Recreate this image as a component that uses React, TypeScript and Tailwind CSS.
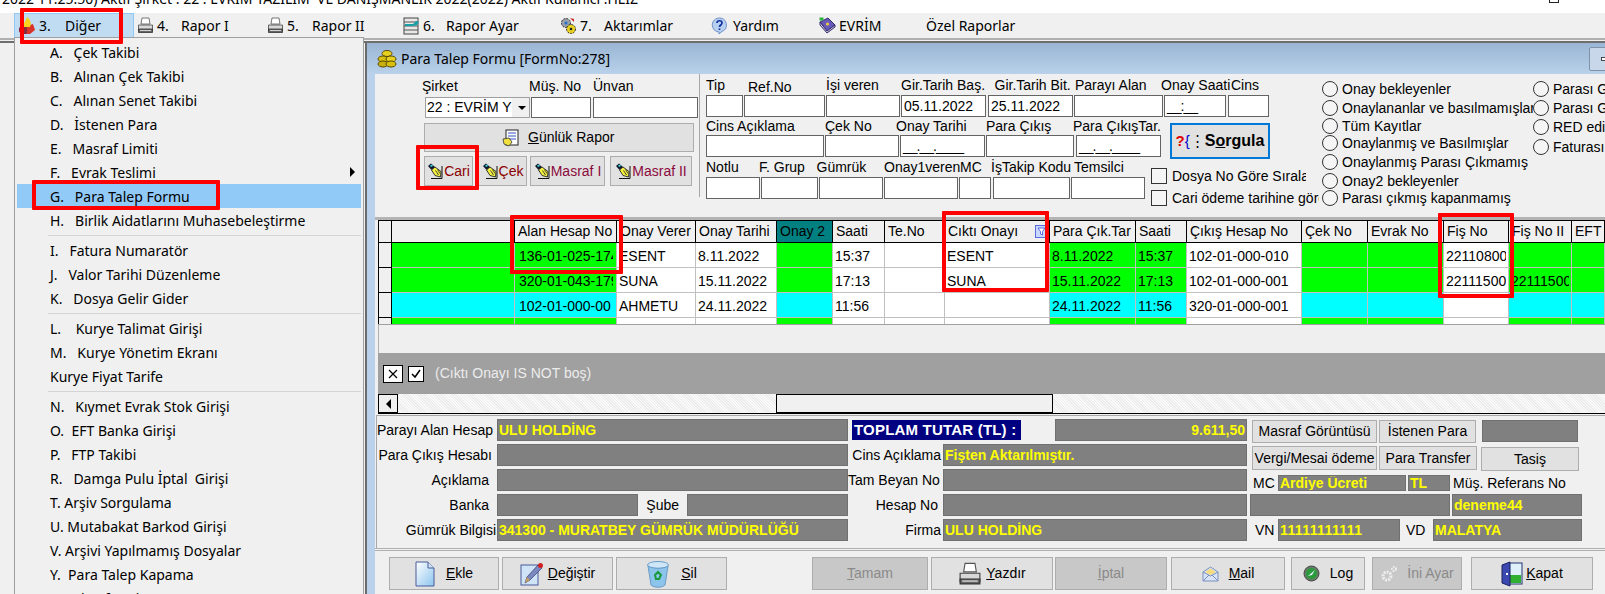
import React from "react";

const GREEN = "bg-[#00ff00]";
const CYAN = "bg-[#00ffff]";
const WHITE = "bg-white";

function Fire() {
  return (
    <svg width="18" height="18" viewBox="0 0 18 18" className="flex-none">
      <path d="M1 11 L5 7 L9 9 L9 17 L5 17 L1 15 Z" fill="#8a2a3a" />
      <path d="M9 9 L15 7 L17 13 L12 17 L9 17 Z" fill="#d8342a" />
      <path d="M6 10 C5 6 8 4 9 0 C12 2 14 6 12 10 Z" fill="#f7d21e" />
    </svg>
  );
}
function Printer({ s = 17 }: { s?: number }) {
  return (
    <svg width={s} height={s} viewBox="0 0 17 17" className="flex-none">
      <path d="M5 1 H12 L13 7 H4 Z" fill="#fff" stroke="#555" strokeWidth="0.8" />
      <path d="M1.5 8 H15.5 V14 H1.5 Z" fill="#d8d8d8" stroke="#444" strokeWidth="0.8" />
      <path d="M1.5 12 H15.5 V15.5 H1.5 Z" fill="#666" stroke="#333" strokeWidth="0.8" />
      <path d="M3 13.5 H14" stroke="#eee" strokeWidth="0.8" />
    </svg>
  );
}
function Tools() {
  return (
    <svg width="17" height="18" viewBox="0 0 17 18" className="flex-none">
      <rect x="1" y="1" width="14" height="16" fill="#e8e8e8" stroke="#444" />
      <path d="M1 5 H15 M1 9 H15 M1 13 H15" stroke="#555" />
      <path d="M2 7 H10 L13 4 L16 5 L14 8 L10 9 H2 Z" fill="#17a0a8" />
    </svg>
  );
}
function Gears() {
  return (
    <svg width="17" height="18" viewBox="0 0 17 18" className="flex-none">
      <circle cx="6" cy="6" r="4.5" fill="#9aa0a8" stroke="#333" strokeDasharray="2 1" />
      <circle cx="6" cy="6" r="1.5" fill="#1f6fd0" />
      <circle cx="11" cy="12" r="4.5" fill="#e8d020" stroke="#333" strokeDasharray="2 1" />
      <path d="M10 1 L14 2 L14 5 Z" fill="#d02020" />
      <circle cx="11" cy="12" r="1.3" fill="#222" />
    </svg>
  );
}
function Help() {
  return (
    <svg width="17" height="18" viewBox="0 0 17 18" className="flex-none">
      <path d="M8.5 1 A7 7 0 0 1 11 14.5 L8 17 L8 15 A7 7 0 0 1 8.5 1 Z" fill="#b8d0f0" stroke="#7090c8" />
      <path d="M6 6 C6 3 11 3 11 6 C11 8 8.5 8 8.5 10 M8.5 11.5 V13" stroke="#1030a0" strokeWidth="1.7" fill="none" />
    </svg>
  );
}
function Book() {
  return (
    <svg width="17" height="17" viewBox="0 0 17 17" className="flex-none">
      <path d="M1 5 L9 1 L16 8 L8 14 Z" fill="#6a5ab8" stroke="#332a70" />
      <path d="M1 5 V8 L8 16 L16 10 V8 L8 14 Z" fill="#c8c8d8" stroke="#332a70" />
      <circle cx="8.5" cy="7" r="1.5" fill="#f0d040" />
      <rect x="0.5" y="0.5" width="4" height="3" fill="#30b040" />
    </svg>
  );
}
function Coins() {
  return (
    <svg width="20" height="20" viewBox="0 0 20 20" className="flex-none">
      <ellipse cx="10" cy="4.5" rx="5" ry="3" fill="#e8d020" stroke="#5a4a00" />
      <ellipse cx="6" cy="10" rx="5" ry="3" fill="#d8c010" stroke="#5a4a00" />
      <ellipse cx="14" cy="10" rx="5" ry="3" fill="#e8d020" stroke="#5a4a00" />
      <ellipse cx="6" cy="15" rx="5" ry="3" fill="#c8b010" stroke="#5a4a00" />
      <ellipse cx="14" cy="15" rx="5" ry="3" fill="#d8c010" stroke="#5a4a00" />
    </svg>
  );
}
function PenHand() {
  return (
    <svg width="17" height="17" viewBox="0 0 17 17" className="flex-none">
      <path d="M1 3 L4 0.5 L8 4 L4.5 7 Z" fill="#10182a" />
      <path d="M3 2.5 L5 1.5 L6 3 L4 4 Z" fill="#40d0e0" />
      <path d="M4.5 7 L8 4 L14 8.5 L13.5 14 L8 12.5 Z" fill="#f4f040" stroke="#222" strokeWidth="0.9" />
      <path d="M8.5 7.5 L11.5 12 M10.5 6.5 L13 10.5" stroke="#222" strokeWidth="0.8" />
      <path d="M15 3 V15.5 H4" stroke="#111" fill="none" />
    </svg>
  );
}
function DocHand() {
  return (
    <svg width="17" height="18" viewBox="0 0 17 18" className="flex-none">
      <rect x="4" y="1" width="12" height="15" fill="#fff" stroke="#222" />
      <path d="M6 4 H14 M6 7 H14 M6 10 H14" stroke="#3050c0" />
      <path d="M1 10 L7 9 L10 13 L7 17 L2 15 Z" fill="#f0e040" stroke="#333" strokeWidth="0.8" />
    </svg>
  );
}
function Doc() {
  return (
    <svg width="20" height="26" viewBox="0 0 20 26" className="flex-none">
      <defs>
        <linearGradient id="dg" x1="0" y1="0" x2="1" y2="1">
          <stop offset="0" stopColor="#ffffff" />
          <stop offset="1" stopColor="#8cc4ee" />
        </linearGradient>
      </defs>
      <path d="M1 1 H13 L19 7 V25 H1 Z" fill="url(#dg)" stroke="#4a5a9a" />
      <path d="M13 1 V7 H19" fill="#cfe4f6" stroke="#4a5a9a" />
    </svg>
  );
}
function PencilDoc() {
  return (
    <svg width="24" height="24" viewBox="0 0 24 24" className="flex-none">
      <rect x="1" y="3" width="17" height="20" fill="#cfe4f6" stroke="#4a5a9a" />
      <path d="M5 21 L7 15 L18 3 L22 6 L10 18 Z" fill="#7a88c0" stroke="#3a3a70" strokeWidth="0.7" />
      <path d="M5 21 L7 15 L10 18 Z" fill="#c8a060" />
      <circle cx="20.5" cy="3.5" r="2.5" fill="#d02020" />
    </svg>
  );
}
function Bin() {
  return (
    <svg width="24" height="28" viewBox="0 0 24 28" className="flex-none">
      <ellipse cx="12" cy="5" rx="10.5" ry="3.5" fill="#cfe6f8" stroke="#6a9cc8" />
      <path d="M2 6 L5 25 C8 28 16 28 19 25 L22 6 C18 9 6 9 2 6 Z" fill="#8cc4ec" stroke="#6a9cc8" />
      <path d="M9 15 L12 12 L15 15 L13 19 L10 19 Z" fill="none" stroke="#1a9a3a" strokeWidth="2" />
    </svg>
  );
}
function Mail() {
  return (
    <svg width="17" height="16" viewBox="0 0 17 16" className="flex-none">
      <path d="M1 6 L8.5 1 L16 6 V15 H1 Z" fill="#d8e4f6" stroke="#7a90c0" />
      <path d="M3 6 L8.5 2.5 L14 6 L8.5 9 Z" fill="#f6dc80" />
      <path d="M1 6 L8.5 10 L16 6 M1 15 L7 9 M16 15 L10 9" fill="none" stroke="#7a90c0" />
    </svg>
  );
}
function Log() {
  return (
    <svg width="17" height="17" viewBox="0 0 17 17" className="flex-none">
      <circle cx="8.5" cy="8.5" r="7.5" fill="#6a7a6a" stroke="#444" />
      <circle cx="8.5" cy="8.5" r="5.5" fill="#2a9a3a" />
      <path d="M5 11 L12 5 L9 10 Z" fill="#e0f0ff" />
    </svg>
  );
}
function Gear() {
  return (
    <svg width="17" height="17" viewBox="0 0 17 17" className="flex-none">
      <circle cx="7" cy="11" r="4" fill="none" stroke="#eee" strokeWidth="3" strokeDasharray="2 1" />
      <circle cx="14" cy="4" r="2" fill="none" stroke="#eee" strokeWidth="2" strokeDasharray="1.5 1" />
    </svg>
  );
}
function Door() {
  return (
    <svg width="22" height="26" viewBox="0 0 22 26" className="flex-none">
      <rect x="8" y="2" width="13" height="21" fill="#dff0fa" stroke="#223070" />
      <rect x="9" y="14" width="11" height="8" fill="#30b030" />
      <path d="M1 4 L9 1 V25 L1 22 Z" fill="#3a48b0" stroke="#1a2060" />
      <rect x="5" y="12" width="2" height="2" fill="#fff" />
    </svg>
  );
}

const menuBar: { icon: React.ReactNode; num?: string; text: string; box: string; gap: string; space: string }[] = [
  { icon: <Printer />, num: "4.", text: "Rapor I", box: "w-[130px]", gap: "w-[21px]", space: "gap-[3px]" },
  { icon: <Printer />, num: "5.", text: "Rapor II", box: "w-[136px]", gap: "w-[22px]", space: "gap-[3px]" },
  { icon: <Tools />, num: "6.", text: "Rapor Ayar", box: "w-[157px]", gap: "w-[20px]", space: "gap-[3px]" },
  { icon: <Gears />, num: "7.", text: "Aktarımlar", box: "w-[151px]", gap: "w-[21px]", space: "gap-[3px]" },
  { icon: <Help />, text: "Yardım", box: "w-[108px]", gap: "", space: "gap-[5px]" },
  { icon: <Book />, text: "EVRİM", box: "w-[107px]", gap: "", space: "gap-[3px]" },
];

const menuItems: (string | null)[] = [
  "A.   Çek Takibi",
  "B.   Alınan Çek Takibi",
  "C.   Alınan Senet Takibi",
  "D.   İstenen Para",
  "E.   Masraf Limiti",
  "F.   Evrak Teslimi",
  "G.   Para Talep Formu",
  "H.   Birlik Aidatlarını Muhasebeleştirme",
  null,
  "I.   Fatura Numaratör",
  "J.   Valor Tarihi Düzenleme",
  "K.   Dosya Gelir Gider",
  null,
  "L.    Kurye Talimat Girişi",
  "M.   Kurye Yönetim Ekranı",
  "Kurye Fiyat Tarife",
  null,
  "N.   Kıymet Evrak Stok Girişi",
  "O.  EFT Banka Girişi",
  "P.   FTP Takibi",
  "R.   Damga Pulu İptal  Girişi",
  "T. Arşiv Sorgulama",
  "U. Mutabakat Barkod Girişi",
  "V. Arşivi Yapılmamış Dosyalar",
  "Y.  Para Talep Kapama",
  "Z. Sal Raf And Tarama",
];

function Labels({ items }: { items: [string, string][] }) {
  return (
    <>
      {items.map(([t, c]) => (
        <span key={t} className={`flex-none whitespace-nowrap ${c}`}>
          {t}
        </span>
      ))}
    </>
  );
}

function Inp({ w, children }: { w: string; children?: React.ReactNode }) {
  return (
    <div className={`flex-none h-full bg-white border border-[#646464] px-[2px] leading-[20px] overflow-hidden whitespace-nowrap ${w}`}>
      {children}
    </div>
  );
}

function Mask() {
  return <span className="tracking-[-1px] text-black">__.__.____</span>;
}

function SmallBtn({ w, color, children }: { w: string; color: string; children: React.ReactNode }) {
  return (
    <div className={`flex-none h-[30px] flex items-center justify-center bg-[#e1e1e1] border border-[#adadad] ${w} ${color}`}>
      <PenHand />
      {children}
    </div>
  );
}

function Radio({ h, text, w }: { h: string; text: string; w: string }) {
  return (
    <div className={`flex items-start overflow-hidden whitespace-nowrap ${h} ${w}`}>
      <span className="flex-none w-[16px] h-[16px] rounded-full border border-[#333] bg-[#f5f5f5] mr-[4px]" />
      <span className="leading-[16px]">{text}</span>
    </div>
  );
}

const columns = "grid grid-cols-[14px_123px_102px_79px_81px_56px_52px_60px_105px_86px_51px_115px_66px_76px_65px_63px_33px]";

const headers = ["", "", "Alan Hesap No", "Onay Verer", "Onay Tarihi", "Onay 2", "Saati", "Te.No", "Cıktı Onayı", "Para Çık.Tar", "Saati", "Çıkış Hesap No", "Çek No", "Evrak No", "Fiş No", "Fiş No II", "EFT"];

function rowCells(c: string, v: string[]) {
  const bg = [
    "bg-[#f0f0f0]", c, c, WHITE, WHITE, c, WHITE, WHITE, WHITE, c, c, WHITE, c, c, WHITE, c, c,
  ];
  return bg.map((b, i) => ({ b, t: v[i] || "" }));
}

const rows = [
  { h: "h-[25px]", cells: rowCells(GREEN, ["", "", "136-01-025-174", "ESENT", "8.11.2022", "", "15:37", "", "ESENT", "8.11.2022", "15:37", "102-01-000-010", "", "", "221108000", "", ""]) },
  { h: "h-[25px]", cells: rowCells(GREEN, ["", "", "320-01-043-179", "SUNA", "15.11.2022", "", "17:13", "", "SUNA", "15.11.2022", "17:13", "102-01-000-001", "", "", "221115000", "221115000", ""]) },
  { h: "h-[25px]", cells: rowCells(CYAN, ["", "", "102-01-000-00", "AHMETU", "24.11.2022", "", "11:56", "", "", "24.11.2022", "11:56", "320-01-000-001", "", "", "", "", ""]) },
  { h: "h-[25px]", cells: rowCells(GREEN, []) },
];

function Grey({ w, h = "h-[22px]", right, children }: { w: string; h?: string; right?: boolean; children?: React.ReactNode }) {
  return (
    <div className={`flex-none ${h} ${w} bg-[#808080] border border-[#707070] text-[#ffff00] font-bold px-[1px] overflow-hidden whitespace-nowrap flex items-center ${right ? "justify-end" : ""}`}>
      {children}
    </div>
  );
}

function Lab({ w, children, pr = "pr-[0px]" }: { w: string; pr?: string; children: React.ReactNode }) {
  return <div className={`flex-none ${w} ${pr} text-right whitespace-nowrap leading-[22px]`}>{children}</div>;
}

function PBtn({ w, h, children }: { w: string; h: string; children: React.ReactNode }) {
  return (
    <div className={`flex-none ${w} ${h} flex items-center justify-center bg-[#e1e1e1] border border-[#adadad] whitespace-nowrap`}>
      {children}
    </div>
  );
}

function BigBtn({ w, ml, off, gap = "gap-[10px]", children }: { w: string; ml: string; off?: boolean; gap?: string; children: React.ReactNode }) {
  return (
    <div className={`flex-none h-[33px] flex items-center justify-center ${gap} border border-[#adadad] ${w} ${ml} ${off ? "bg-[#c8c8c8] text-[#8a8a8a]" : "bg-[#e1e1e1] text-black"}`}>
      {children}
    </div>
  );
}

export default function App() {
  return (
    <div className="relative w-[1605px] h-[594px] overflow-hidden bg-[#f0f0f0] text-black text-[14px] font-['Liberation_Sans',sans-serif]">
      {/* window caption, cut by the top of the picture */}
      <div className="relative h-[13px] bg-white overflow-hidden">
        <div className="-mt-[9px] pl-[2px] leading-[16px] whitespace-pre font-['Noto_Sans',sans-serif] text-[14px]">
          2022 11:25:50) Aktif Şirket : 22 : EVRİM YAZILIM  VE DANIŞMANLIK 2022(2022) Aktif Kullanıcı :HLİZ
        </div>
        <div className="absolute left-[1549px] top-0 w-[10px] h-[3px] border border-t-0 border-[#222]" />
      </div>

      {/* menu bar */}
      <div className="h-[25px] flex items-center font-['Noto_Sans',sans-serif] text-[14px] whitespace-nowrap">
        <div className="ml-[14px] w-[120px] h-[25px] flex-none flex items-center bg-[#c0dcf3] border border-[#90c8f6] pl-[3px] gap-[3px]">
          <Fire />
          <span className="w-[23px]">3.</span>
          <span>Diğer</span>
        </div>
        <div className="w-[3px] flex-none" />
        {menuBar.map((m) => (
          <div key={m.text} className={`flex-none flex items-center ${m.space} ${m.box}`}>
            {m.icon}
            {m.num && <span className={m.gap}>{m.num}</span>}
            <span>{m.text}</span>
          </div>
        ))}
        <div className="flex-none">Özel Raporlar</div>
      </div>

      {/* MDI separator */}
      <div className="h-[5px] border-t-2 border-b-2 border-t-[#b0b0b0] border-b-[#6e6e6e] bg-[#f0f0f0]" />

      {/* MDI child form */}
      <div className="ml-[365px] border-l-2 border-[#6a6a6a] h-[551px] flex flex-col">
        <div className="h-[31px] flex-none flex items-center justify-between bg-gradient-to-b from-[#9ab6d4] to-[#b9d1ea] pl-[10px] font-['Noto_Sans',sans-serif] text-[14px]">
          <div className="flex items-center gap-[4px]">
            <Coins />
            <span>Para Talep Formu [FormNo:278]</span>
          </div>
          <div className="w-[30px] h-[24px] -mr-[14px] flex-none rounded-[2px] border border-[#7f93ab] bg-[#c8d8ea] flex items-center pl-[11px]">
            <div className="w-[8px] h-[4px] bg-white border border-[#444]" />
          </div>
        </div>

        <div className="flex-1 flex min-h-0">
          <div className="w-[8px] flex-none bg-[#b9d1ea]" />
          <div className="flex-1 min-w-0 flex flex-col">
            {/* filter panel */}
            <div className="h-[143px] flex-none flex">
              <div className="w-[325px] flex-none border-r border-[#a8a8a8] h-[123px] pl-[47px]">
                <div className="h-[23px] pt-[5px] flex leading-[15px]">
                  <Labels items={[["Şirket", "w-[107px]"], ["Müş. No", "w-[64px]"], ["Ünvan", ""]]} />
                </div>
                <div className="h-[21px] flex">
                  <div className="ml-[3px] w-[105px] flex-none bg-white border border-[#a0a0a0] flex items-center justify-between pl-[1px] overflow-hidden">
                    <span className="whitespace-nowrap">22 : EVRİM Y</span>
                    <span className="w-[20px] h-full flex-none bg-[#f0f0f0] flex items-center justify-center">
                      <span className="w-0 h-0 border-x-[4px] border-t-[4px] border-x-transparent border-t-black" />
                    </span>
                  </div>
                  <div className="w-[1px] flex-none" />
                  <Inp w="w-[60px]" />
                  <div className="w-[2px] flex-none" />
                  <Inp w="w-[105px]" />
                </div>
                <div className="ml-[2px] mt-[5px] w-[270px] h-[29px] bg-[#e1e1e1] border border-[#adadad] flex items-center gap-[9px] pl-[77px]">
                  <DocHand />
                  <span>
                    <u>G</u>ünlük Rapor
                  </span>
                </div>
                <div className="ml-[2px] mt-[4px] flex">
                  <SmallBtn w="w-[49px]" color="text-[#8b0000]">
                    <span>Cari</span>
                  </SmallBtn>
                  <div className="w-[5px] flex-none" />
                  <SmallBtn w="w-[49px]" color="text-[#8b0000]">
                    <span>Çek</span>
                  </SmallBtn>
                  <div className="w-[3px] flex-none" />
                  <SmallBtn w="w-[75px]" color="text-[#8b0a3c]">
                    <span>Masraf I</span>
                  </SmallBtn>
                  <div className="w-[5px] flex-none" />
                  <SmallBtn w="w-[82px]" color="text-[#8b0a3c]">
                    <span>Masraf II</span>
                  </SmallBtn>
                </div>
              </div>

              {/* field grid */}
              <div className="w-[622px] flex-none pl-[6px]">
                <div className="h-[21px] pt-[4px] flex leading-[15px]">
                  <Labels
                    items={[
                      ["Tip", "w-[42px]"],
                      ["Ref.No", "w-[78px] pt-[2px]"],
                      ["İşi veren", "w-[75px]"],
                      ["Gir.Tarih Baş.", "w-[93.5px]"],
                      ["Gir.Tarih Bit.", "w-[80.5px]"],
                      ["Parayı Alan", "w-[86px]"],
                      ["Onay Saati", "w-[70px]"],
                      ["Cins", ""],
                    ]}
                  />
                </div>
                <div className="h-[22px] flex">
                  <Inp w="w-[37px]" />
                  <div className="w-[1px] flex-none" />
                  <Inp w="w-[81px]" />
                  <div className="w-[1px] flex-none" />
                  <Inp w="w-[74px]" />
                  <div className="w-[1px] flex-none" />
                  <Inp w="w-[85px]">05.11.2022</Inp>
                  <div className="w-[2px] flex-none" />
                  <Inp w="w-[85px]">25.11.2022</Inp>
                  <div className="w-[1px] flex-none" />
                  <Inp w="w-[89px]" />
                  <div className="w-[1px] flex-none" />
                  <Inp w="w-[62px]">
                    <span className="tracking-[-1px]">__:__</span>
                  </Inp>
                  <div className="w-[2px] flex-none" />
                  <Inp w="w-[41px]" />
                </div>
                <div className="flex">
                  <div className="w-[445px] flex-none">
                    <div className="h-[18px] pt-[2px] flex leading-[15px]">
                      <Labels
                        items={[
                          ["Cins Açıklama", "w-[119px]"],
                          ["Çek No", "w-[71px]"],
                          ["Onay Tarihi", "w-[90px]"],
                          ["Para Çıkış", "w-[87px]"],
                          ["Para ÇıkışTar.", ""],
                        ]}
                      />
                    </div>
                    <div className="h-[22px] flex">
                      <Inp w="w-[118px]" />
                      <div className="w-[1px] flex-none" />
                      <Inp w="w-[74px]" />
                      <div className="w-[1px] flex-none" />
                      <Inp w="w-[85px]">
                        <Mask />
                      </Inp>
                      <div className="w-[1px] flex-none" />
                      <Inp w="w-[88px]" />
                      <div className="w-[2px] flex-none" />
                      <Inp w="w-[85px]">
                        <Mask />
                      </Inp>
                    </div>
                    <div className="h-[20px] pt-[3px] flex leading-[15px]">
                      <Labels
                        items={[
                          ["Notlu", "w-[53px]"],
                          ["F. Grup", "w-[57.5px]"],
                          ["Gümrük", "w-[67.5px]"],
                          ["Onay1veren", "w-[76px]"],
                          ["MC", "w-[31px]"],
                          ["İşTakip Kodu", "w-[83px]"],
                          ["Temsilci", ""],
                        ]}
                      />
                    </div>
                    <div className="h-[22px] flex">
                      <Inp w="w-[54px]" />
                      <div className="w-[1px] flex-none" />
                      <Inp w="w-[57px]" />
                      <div className="w-[1px] flex-none" />
                      <Inp w="w-[64px]" />
                      <div className="w-[1px] flex-none" />
                      <Inp w="w-[74px]" />
                      <div className="w-[1px] flex-none" />
                      <Inp w="w-[32px]" />
                      <div className="w-[2px] flex-none" />
                      <Inp w="w-[77px]" />
                      <div className="w-[1px] flex-none" />
                      <Inp w="w-[74px]" />
                    </div>
                  </div>
                  <div className="flex-none">
                    <div className="ml-[19px] mt-[6px] w-[100px] h-[36px] bg-[#e1e1e1] border-[2px] border-[#0078d7] flex items-center justify-center gap-[2px] font-bold text-[16px]">
                      <span className="font-normal text-[15px] flex items-center">
                        <span className="text-[#e00000] font-bold">?</span>
                        <span className="text-[#0000d0]">{"{"}</span>
                        <span className="tracking-[-2px]">⋮</span>
                      </span>
                      <span>
                        S<u>o</u>rgula
                      </span>
                    </div>
                    <div className="mt-[9px] h-[16px] w-[155px] flex items-center">
                      <span className="w-[16px] h-[16px] flex-none border border-[#333] bg-[#f5f5f5] mr-[5px]" />
                      <span className="w-[134px] overflow-hidden whitespace-nowrap">Dosya No Göre Sıralama</span>
                    </div>
                    <div className="mt-[6px] h-[16px] w-[170px] flex items-center">
                      <span className="w-[16px] h-[16px] flex-none border border-[#333] bg-[#f5f5f5] mr-[5px]" />
                      <span className="w-[147px] overflow-hidden whitespace-nowrap">Cari ödeme tarihine göre</span>
                    </div>
                  </div>
                </div>
              </div>

              {/* radio groups */}
              <div className="w-[211px] flex-none pt-[7px]">
                <Radio w="w-[211px]" h="h-[19px]" text="Onay bekleyenler" />
                <Radio w="w-[211px]" h="h-[18px]" text="Onaylananlar ve basılmamışlar" />
                <Radio w="w-[211px]" h="h-[17px]" text="Tüm Kayıtlar" />
                <Radio w="w-[211px]" h="h-[19px]" text="Onaylanmış ve Basılmışlar" />
                <Radio w="w-[211px]" h="h-[19px]" text="Onaylanmış Parası Çıkmamış" />
                <Radio w="w-[211px]" h="h-[17px]" text="Onay2 bekleyenler" />
                <Radio w="w-[211px]" h="h-[16px]" text="Parası çıkmış kapanmamış" />
              </div>
              <div className="w-[72px] flex-none pt-[7px]">
                <Radio w="w-[72px]" h="h-[19px]" text="Parası Gelmiş" />
                <Radio w="w-[72px]" h="h-[19px]" text="Parası Gelmemiş" />
                <Radio w="w-[72px]" h="h-[20px]" text="RED edilenler" />
                <Radio w="w-[72px]" h="h-[19px]" text="Faturası Gelen" />
              </div>
            </div>

            {/* grid */}
            <div className="border-t-2 border-b border-[#b4b4b4] h-[3px] flex-none" />
            <div className="ml-[3px] h-[105px] flex-none overflow-hidden border-b border-[#a0a0a0] pt-0">
              <div className={`${columns} h-[23px] border-t border-b border-black`}>
                {headers.map((h, i) => (
                  <div
                    key={i}
                    className={`flex items-center justify-between pl-[3px] pr-[1px] border-r border-black overflow-hidden whitespace-nowrap ${
                      h === "Onay 2" ? "bg-[#008080]" : "bg-[#f0f0f0]"
                    } ${i === 0 ? "border-l" : ""}`}
                  >
                    <span>{h}</span>
                    {h === "Cıktı Onayı" && (
                      <svg width="13" height="13" viewBox="0 0 13 13" className="flex-none">
                        <rect x="0.5" y="0.5" width="12" height="12" fill="#c8d8ff" stroke="#5a6ae0" />
                        <path d="M3 3 H10 L7.5 6.5 V10 L5.5 9 V6.5 Z" fill="#fff" stroke="#3a4ad0" strokeWidth="0.8" />
                      </svg>
                    )}
                  </div>
                ))}
              </div>
              {rows.map((r, ri) => (
                <div key={ri} className={`${columns} ${r.h}`}>
                  {r.cells.map((c, i) => (
                    <div
                      key={i}
                      className={`border-b leading-[26px] ${c.b} ${
                        i === 0 ? "border-x border-x-black border-b-black" : "border-r border-[#c0c0c0]"
                      } ${i === 2 ? "pl-[4px] pr-[3px]" : "pl-[2px] pr-[2px]"}`}
                    >
                      <div className="overflow-hidden whitespace-nowrap h-[24px]">{c.t}</div>
                    </div>
                  ))}
                </div>
              ))}
            </div>
            <div className="ml-[3px] h-[28px] flex-none bg-[#efefef] border-l border-[#b0b0b0]" />

            {/* filter bar */}
            <div className="ml-[3px] h-[41px] flex-none bg-[#a0a0a0] flex items-center pl-[5px] text-[#ececec]">
              <div className="w-[20px] h-[18px] flex-none bg-white border border-black flex items-center justify-center">
                <svg width="12" height="12" viewBox="0 0 12 12">
                  <path d="M2 2 L10 10 M10 2 L2 10" stroke="#000" strokeWidth="1.2" />
                </svg>
              </div>
              <div className="ml-[5px] w-[16px] h-[16px] flex-none bg-white border border-black flex items-center justify-center">
                <svg width="12" height="12" viewBox="0 0 12 12">
                  <path d="M2 6 L5 9 L10 2" stroke="#000" strokeWidth="1.5" fill="none" />
                </svg>
              </div>
              <span className="ml-[11px]">(Cıktı Onayı IS NOT boş)</span>
            </div>

            {/* horizontal scroll bar */}
            <div className="ml-[3px] h-[20px] flex-none flex bg-[#f6f6f6] bg-[repeating-linear-gradient(45deg,#fafafa_0,#fafafa_1px,#ececec_1px,#ececec_2px)] border-b border-black">
              <div className="w-[20px] flex-none bg-[#f0f0f0] border border-black flex items-center justify-center">
                <span className="w-0 h-0 border-y-[5px] border-r-[5px] border-y-transparent border-r-black" />
              </div>
              <div className="w-[378px] flex-none" />
              <div className="w-[277px] flex-none bg-[#f0f0f0] border border-black" />
            </div>

            {/* detail panel */}
            <div className="mt-[1px] h-[133px] flex-none border-t border-l border-[#a8a8a8] ml-[1px] flex pt-[3px]">
              <div className="w-[871px] flex-none flex flex-col gap-[3px]">
                <div className="flex h-[22px]">
                  <Lab w="w-[117px]" pr="pr-[3px]">Parayı Alan Hesap</Lab>
                  <div className="w-[3px] flex-none" />
                  <Grey w="w-[351px]">ULU HOLDİNG</Grey>
                  <div className="w-[4px] flex-none" />
                  <div className="w-[169px] h-[20px] flex-none mt-[1px] bg-[#000080] text-white font-bold text-[15px] pl-[2px] leading-[20px] whitespace-nowrap tracking-[0.2px]">TOPLAM TUTAR (TL) :</div>
                  <div className="w-[34px] flex-none" />
                  <Grey w="w-[192px]" right>9.611,50</Grey>
                </div>
                <div className="flex h-[22px]">
                  <Lab w="w-[117px]" pr="pr-[2px]">Para Çıkış Hesabı</Lab>
                  <div className="w-[3px] flex-none" />
                  <Grey w="w-[351px]" />
                  <Lab w="w-[95px]" pr="pr-[2px]">Cins Açıklama</Lab>
                  <Grey w="w-[304px]">Fişten Aktarılmıştır.</Grey>
                </div>
                <div className="flex h-[22px]">
                  <Lab w="w-[112px]">Açıklama</Lab>
                  <div className="w-[8px] flex-none" />
                  <Grey w="w-[351px]" />
                  <Lab w="w-[91px]">Tam Beyan No</Lab>
                  <div className="w-[4px] flex-none" />
                  <Grey w="w-[304px]" />
                </div>
                <div className="flex h-[22px]">
                  <Lab w="w-[112px]">Banka</Lab>
                  <div className="w-[8px] flex-none" />
                  <Grey w="w-[141px]" />
                  <Lab w="w-[41px]">Şube</Lab>
                  <div className="w-[8px] flex-none" />
                  <Grey w="w-[161px]" />
                  <Lab w="w-[90px]">Hesap No</Lab>
                  <div className="w-[5px] flex-none" />
                  <Grey w="w-[304px]" />
                </div>
                <div className="flex h-[22px]">
                  <Lab w="w-[120px]" pr="pr-[1px]">Gümrük Bilgisi</Lab>
                  <Grey w="w-[351px]">341300 - MURATBEY GÜMRÜK MÜDÜRLÜĞÜ</Grey>
                  <Lab w="w-[93px]">Firma</Lab>
                  <div className="w-[2px] flex-none" />
                  <Grey w="w-[304px]">ULU HOLDİNG</Grey>
                </div>
              </div>

              <div className="flex-none ml-[2px] flex flex-col">
                <div className="flex h-[23px] mt-[1px] ml-[2px]">
                  <PBtn w="w-[125px]" h="h-[23px]">Masraf Görüntüsü</PBtn>
                  <div className="w-[2px] flex-none" />
                  <PBtn w="w-[97px]" h="h-[23px]">İstenen Para</PBtn>
                  <div className="w-[6px] flex-none" />
                  <Grey w="w-[96px]" />
                </div>
                <div className="flex h-[25px] mt-[3px] ml-[2px]">
                  <PBtn w="w-[125px]" h="h-[24px]">Vergi/Mesai ödeme</PBtn>
                  <div className="w-[2px] flex-none" />
                  <PBtn w="w-[98px]" h="h-[24px]">Para Transfer</PBtn>
                  <div className="w-[4px] flex-none" />
                  <PBtn w="w-[98px]" h="h-[24px] mt-[1px]">Tasiş</PBtn>
                </div>
                <div className="flex h-[16px] mt-[4px] items-center">
                  <span className="w-[28px] flex-none pl-[3px]">MC</span>
                  <Grey w="w-[128px]" h="h-[16px]">Ardiye Ücreti</Grey>
                  <div className="w-[2px] flex-none" />
                  <Grey w="w-[42px]" h="h-[16px]">TL</Grey>
                  <span className="ml-[3px] whitespace-nowrap">Müş. Referans No</span>
                </div>
                <div className="flex h-[22px] mt-[3px]">
                  <Grey w="w-[200px]" />
                  <div className="w-[2px] flex-none" />
                  <Grey w="w-[130px]">deneme44</Grey>
                </div>
                <div className="flex h-[22px] mt-[3px] items-center">
                  <span className="w-[28px] flex-none pl-[5px]">VN</span>
                  <Grey w="w-[122px]">
                    <span className="tracking-[0.4px]">11111111111</span>
                  </Grey>
                  <span className="w-[33px] flex-none pl-[6px]">VD</span>
                  <Grey w="w-[149px]">MALATYA</Grey>
                </div>
              </div>
            </div>

            <div className="h-[3px] mt-[0px] flex-none border-t border-b border-[#b0b0b0]" />

            {/* action buttons */}
            <div className="mt-[6px] flex">
              <BigBtn w="w-[110px]" ml="ml-[14px]" gap="gap-[11px]">
                <Doc />
                <span>
                  <u>E</u>kle
                </span>
              </BigBtn>
              <BigBtn w="w-[111px]" ml="ml-[3px]" gap="gap-[4px]">
                <PencilDoc />
                <span>
                  <u>D</u>eğiştir
                </span>
              </BigBtn>
              <BigBtn w="w-[111px]" ml="ml-[3px]" gap="gap-[11px]">
                <Bin />
                <span>
                  <u>S</u>il
                </span>
              </BigBtn>
              <BigBtn w="w-[116px]" ml="ml-[85px]" off>
                <span>
                  <u>T</u>amam
                </span>
              </BigBtn>
              <BigBtn w="w-[122px]" ml="ml-[3px]" gap="gap-[4px]">
                <Printer s={24} />
                <span>
                  <u>Y</u>azdır
                </span>
              </BigBtn>
              <BigBtn w="w-[112px]" ml="ml-[2px]" off>
                <span>
                  <u>İ</u>ptal
                </span>
              </BigBtn>
              <BigBtn w="w-[114px]" ml="ml-[4px]">
                <Mail />
                <span>
                  <u>M</u>ail
                </span>
              </BigBtn>
              <BigBtn w="w-[74px]" ml="ml-[6px]">
                <Log />
                <span>Log</span>
              </BigBtn>
              <BigBtn w="w-[90px]" ml="ml-[7px]" off>
                <Gear />
                <span>İni Ayar</span>
              </BigBtn>
              <BigBtn w="w-[122px]" ml="ml-[9px]" gap="gap-[3px]">
                <Door />
                <span>
                  <u>K</u>apat
                </span>
              </BigBtn>
            </div>
          </div>
        </div>
      </div>

      {/* open drop-down menu */}
      <div className="absolute left-[14px] top-[37px] w-[350px] h-[570px] bg-[#f0f0f0] border border-[#a0a0a0] pt-[2px] px-[2px] font-['Noto_Sans',sans-serif] text-[14px]">
        {menuItems.map((m, i) =>
          m === null ? (
            <div key={i} className="h-[6px] ml-[31px] flex items-center">
              <div className="w-full h-[1px] bg-[#d4d4d4]" />
            </div>
          ) : (
            <div
              key={i}
              className={`h-[24px] pl-[33px] pr-[6px] leading-[24px] whitespace-pre flex justify-between items-center ${
                m.startsWith("G.") ? "bg-[#91c9f7]" : ""
              }`}
            >
              <span className="pt-[2px]">{m}</span>
              {m.startsWith("F.") && (
                <span className="w-0 h-0 border-y-[5px] border-l-[5px] border-y-transparent border-l-black" />
              )}
            </div>
          ),
        )}
      </div>

      {/* red annotations over the screenshot */}
      <div className="absolute left-[20px] top-[8px] w-[103px] h-[36px] border-[4px] border-[#ff0000] rounded-[1px]" />
      <div className="absolute left-[416px] top-[145px] w-[63px] h-[45px] border-[4px] border-[#ff0000] rounded-[1px]" />
      <div className="absolute left-[32px] top-[180px] w-[188px] h-[30px] border-[4px] border-[#ff0000] rounded-[1px]" />
      <div className="absolute left-[510px] top-[215px] w-[113px] h-[59px] border-[4px] border-[#ff0000] rounded-[1px]" />
      <div className="absolute left-[942px] top-[211px] w-[107px] h-[81px] border-[4px] border-[#ff0000] rounded-[1px]" />
      <div className="absolute left-[1438px] top-[213px] w-[76px] h-[85px] border-[4px] border-[#ff0000] rounded-[1px]" />
    </div>
  );
}
